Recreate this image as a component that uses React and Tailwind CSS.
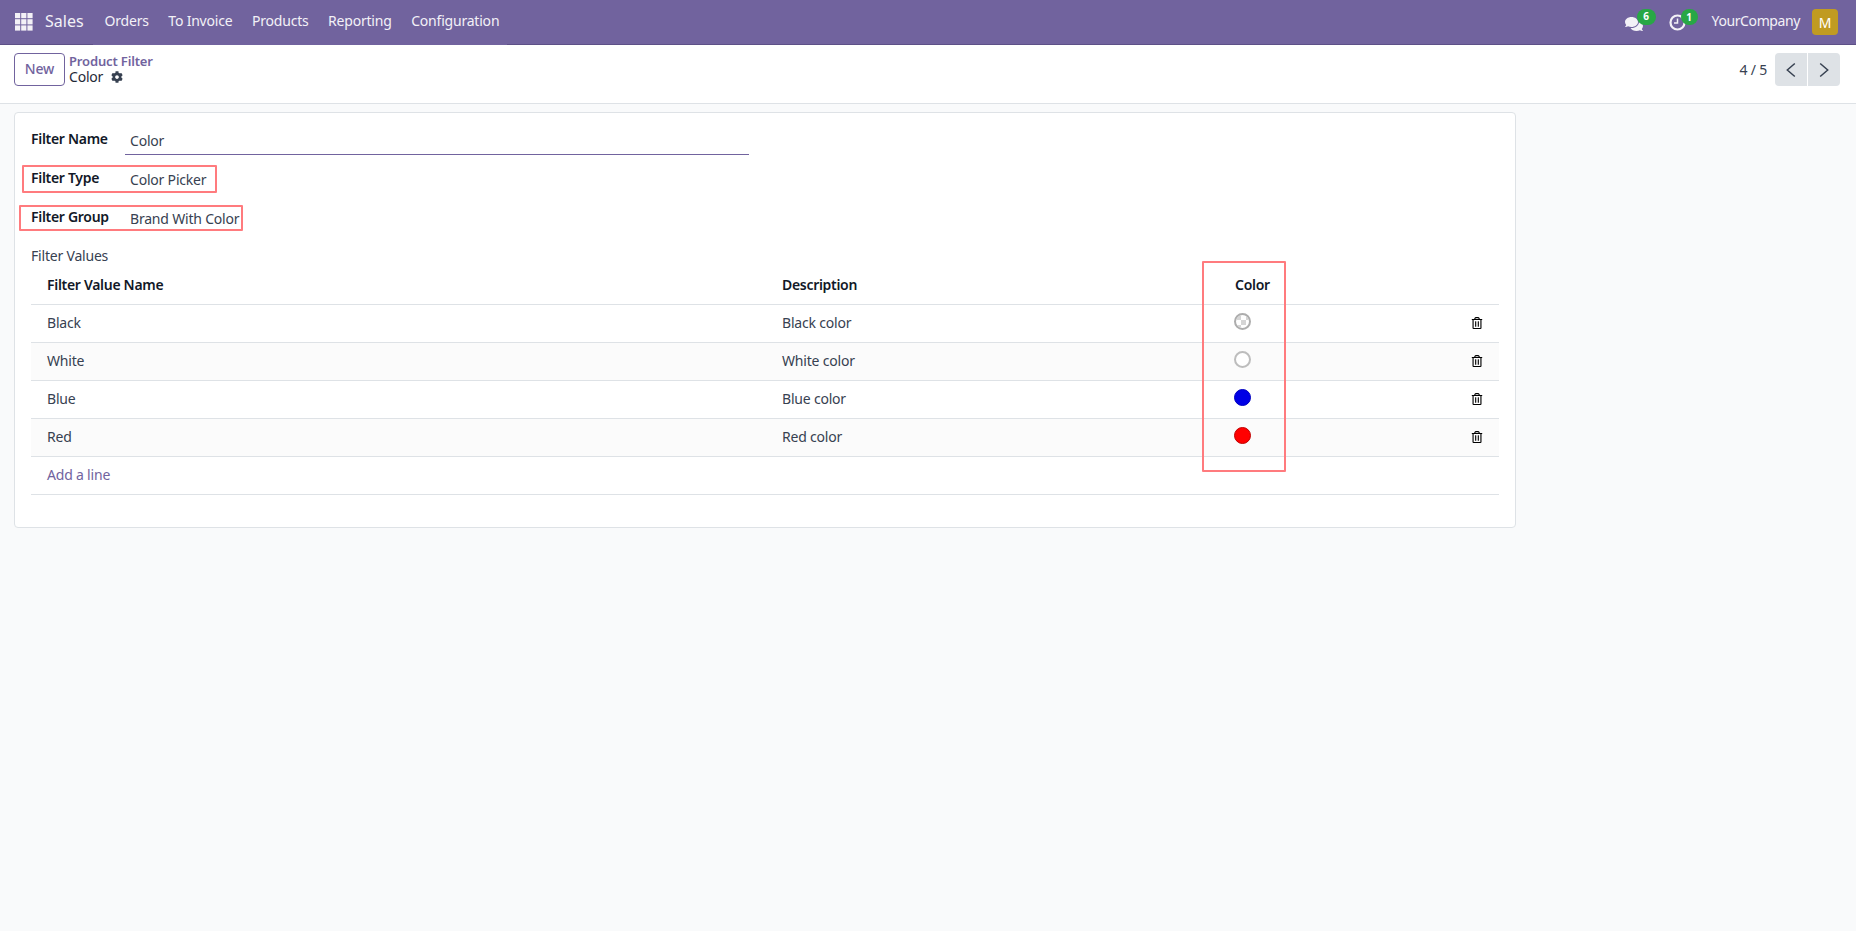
import { FaCog, FaComments, FaRegTrashAlt } from 'react-icons/fa';

const navItems = ['Orders', 'To Invoice', 'Products', 'Reporting', 'Configuration'];

const rows = [
  { name: 'Black', description: 'Black color', swatch: 'black' },
  { name: 'White', description: 'White color', swatch: 'white' },
  { name: 'Blue', description: 'Blue color', swatch: 'blue' },
  { name: 'Red', description: 'Red color', swatch: 'red' },
];

function AppsIcon() {
  return (
    <svg width="18" height="18" viewBox="0 0 18 18" fill="#f3f1f7">
      {[0, 6.2, 12.4].map((y) =>
        [0, 6.2, 12.4].map((x) => <rect key={`${x}-${y}`} x={x} y={y} width="5.2" height="5.2" />)
      )}
    </svg>
  );
}

function ClockIcon() {
  return (
    <svg width="17" height="17" viewBox="0 0 17 17" fill="none" stroke="#f3f1f7" strokeWidth="2.2">
      <circle cx="8.5" cy="8.5" r="7" />
      <path d="M8.5 4.5v4.6H5" strokeWidth="1.5" />
    </svg>
  );
}

function Chevron({ flip }) {
  return (
    <svg width="10" height="16" viewBox="0 0 10 16" fill="none" stroke="#374151" strokeWidth="1.5">
      <path d={flip ? 'M1.2 1.5L8.7 8L1.2 14.5' : 'M8.8 1.5L1.3 8L8.8 14.5'} />
    </svg>
  );
}

function Swatch({ type }) {
  if (type === 'black') {
    return (
      <span className="relative block w-[17px] h-[17px] rounded-full border-2 border-[#adadad] bg-white overflow-hidden">
        <span className="absolute left-[5px] top-[5px] w-[5px] h-[5px] bg-[#d5d5d5]" />
        <span className="absolute left-0 top-0 w-[5px] h-[5px] bg-[#d5d5d5]" />
        <span className="absolute right-0 top-0 w-[3px] h-[5px] bg-[#d5d5d5]" />
        <span className="absolute left-0 bottom-0 w-[5px] h-[3px] bg-[#d5d5d5]" />
      </span>
    );
  }
  if (type === 'white') {
    return <span className="block w-[17px] h-[17px] rounded-full border-2 border-[#bdbdbd] bg-white" />;
  }
  if (type === 'blue') {
    return <span className="block w-[17px] h-[17px] rounded-full bg-[#0000e6] border border-[#0000c0]" />;
  }
  return <span className="block w-[17px] h-[17px] rounded-full bg-[#ff0000] border border-[#c00000]" />;
}

function Field({ label, children }) {
  return (
    <div className="flex h-[39px]">
      <div className="w-[94px] shrink-0 font-semibold tracking-[-0.3px] text-[#111827]">{label}</div>
      {children}
    </div>
  );
}

export default function App() {
  return (
    <div className="min-h-[931px] bg-[#f9fafb] text-[14px] tracking-[-0.2px] text-[#374151]" style={{ fontFamily: '"Noto Sans", sans-serif' }}>
      <nav className="flex h-[45px] items-start justify-between bg-[#71639e] border-b border-[#5d5087] text-[#f3f1f7]">
        <div className="flex items-start">
          <div className="flex items-center h-[44px] pl-[15px] pr-[12px]">
            <AppsIcon />
          </div>
          <div className="flex items-center h-[44px] pb-[3px] pr-[9px] text-[16px] tracking-normal">Sales</div>
          <div className="flex items-center gap-[19.5px] h-[45px] bg-[#71639e] pl-[12px] pr-[8px] pb-[4px]">
            {navItems.map((item) => (
              <span key={item}>{item}</span>
            ))}
          </div>
        </div>
        <div className="flex items-center h-[44px] pr-[18px]">
          <div className="relative mr-[26px] mt-[3px]">
            <FaComments className="text-[18px] text-[#f3f1f7]" />
            <span className="absolute -top-[6px] left-[12px] w-[19px] h-[16px] rounded-full bg-[#28a745] text-white text-[10px] font-bold flex items-center justify-center">6</span>
          </div>
          <div className="relative mr-[26px] mt-[1px]">
            <ClockIcon />
            <span className="absolute -top-[5px] left-[12px] w-[17px] h-[16px] rounded-full bg-[#28a745] text-white text-[10px] font-bold flex items-center justify-center">1</span>
          </div>
          <span className="mr-[12px] pb-[3px] tracking-[-0.4px]">YourCompany</span>
          <span className="w-[26px] h-[26px] rounded bg-[#c09b21] text-white flex items-center justify-center">M</span>
        </div>
      </nav>

      <div className="flex h-[59px] items-start justify-between bg-white border-b border-[#dee2e6] pl-[14px] pr-[16px] pt-[8px]">
        <div className="flex items-start gap-[4px]">
          <button className="w-[51px] h-[33px] pb-[2px] rounded border border-[#71639e] text-[#71639e] font-medium text-[14px]">New</button>
          <div className="leading-[16px]">
            <div className="text-[#71639e] font-semibold text-[13px] tracking-[-0.15px]">Product Filter</div>
            <div className="flex items-center gap-[8px] text-[#1f2937]">
              Color <FaCog className="text-[12px] text-[#374151]" />
            </div>
          </div>
        </div>
        <div className="flex items-center gap-[8px]">
          <span>4 / 5</span>
          <div className="flex gap-px">
            <button className="w-[32px] h-[33px] rounded-l bg-[#dee2e6] flex items-center justify-center"><Chevron /></button>
            <button className="w-[32px] h-[33px] rounded-r bg-[#dee2e6] flex items-center justify-center"><Chevron flip /></button>
          </div>
        </div>
      </div>

      <div className="relative ml-[14px] mt-[8px] w-[1502px] h-[416px] bg-white border border-[#dee2e6] rounded px-[16px] pt-[15px]">
        <Field label="Filter Name">
          <div className="w-[624px] h-[27px] border-b border-[#71639e] pl-[5px] pt-[2px]">Color</div>
        </Field>
        <Field label="Filter Type">
          <div className="pl-[5px] pt-[2px]">Color Picker</div>
        </Field>
        <Field label="Filter Group">
          <div className="pl-[5px] pt-[2px]">Brand With Color</div>
        </Field>
        <div className="h-[21px]">Filter Values</div>

        <table className="w-[1468px] table-fixed border-collapse">
          <colgroup>
            <col className="w-[735px]" />
            <col className="w-[453px]" />
            <col className="w-[240px]" />
            <col className="w-[40px]" />
          </colgroup>
          <thead>
            <tr className="h-[38px] border-b border-[#dee2e6] text-left text-[#111827] tracking-[-0.3px]">
              <th className="pl-[16px] font-semibold">Filter Value Name</th>
              <th className="pl-[16px] font-semibold">Description</th>
              <th className="pl-[16px] font-semibold">Color</th>
              <th />
            </tr>
          </thead>
          <tbody>
            {rows.map((row, i) => (
              <tr key={row.name} className={`h-[38px] border-b border-[#dee2e6] ${i % 2 ? 'bg-[#fbfbfb]' : 'bg-white'}`}>
                <td className="pl-[16px] pb-[1px]">{row.name}</td>
                <td className="pl-[16px] pb-[1px]">{row.description}</td>
                <td className="pl-[15px] pb-[3px]"><Swatch type={row.swatch} /></td>
                <td className="pl-[12px]"><FaRegTrashAlt className="text-[12px] text-black" /></td>
              </tr>
            ))}
            <tr className="h-[38px] border-b border-[#dee2e6]">
              <td className="pl-[16px] pb-[1px] text-[#71639e]" colSpan={4}>Add a line</td>
            </tr>
          </tbody>
        </table>

        <div className="absolute left-[7px] top-[52px] w-[195px] h-[28px] border-2 border-[#ff7b7e] rounded-[1px]" />
        <div className="absolute left-[4px] top-[92px] w-[224px] h-[26px] border-2 border-[#ff7b7e] rounded-[1px]" />
        <div className="absolute left-[1187px] top-[148px] w-[84px] h-[211px] border-2 border-[#ff7b7e] rounded-[1px]" />
      </div>
    </div>
  );
}
